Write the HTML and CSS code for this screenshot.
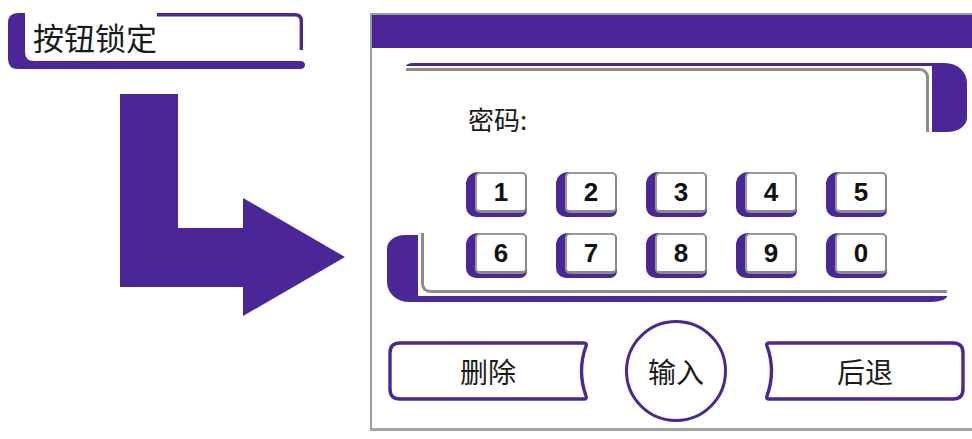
FILE: index.html
```html
<!DOCTYPE html>
<html lang="zh">
<head>
<meta charset="utf-8">
<title>按钮锁定</title>
<link rel="stylesheet" href="styles.css">
</head>
<body>
<div class="page">
  <aside class="side">
    <div class="lock-label">
      <svg class="lock-frame" width="297" height="56" viewBox="0 0 297 56" aria-hidden="true">
        <path class="pf" d="M0,10 Q0,0 10,0 L17,0 L17,39 Q17,48 26,48 L292,48 Q297,48 297,52 Q297,56 292,56 L10,56 Q0,56 0,46 Z"/>
        <path class="ps" d="M149,1.7 L287,1.7 Q293.3,1.7 293.3,8 L293.3,37"/>
      </svg>
      <span class="lock-text">按钮锁定</span>
    </div>
    <svg class="arrow" width="225" height="222" viewBox="0 0 225 222" aria-hidden="true">
      <polygon class="pf" points="0,0 58,0 58,134 123,134 123,104 225,163 123,222 123,193 0,193"/>
    </svg>
  </aside>

  <section class="panel">
    <div class="panel-head"></div>

    <div class="frame-top">
      <div class="ft-body">
        <div class="ft-bar"></div>
        <div class="ft-inner"><span class="pw-label">密码:</span></div>
      </div>
      <div class="ft-cap"></div>
    </div>

    <div class="key-row row-one">
      <div class="key"><span class="face">1</span></div>
      <div class="key"><span class="face">2</span></div>
      <div class="key"><span class="face">3</span></div>
      <div class="key"><span class="face">4</span></div>
      <div class="key"><span class="face">5</span></div>
    </div>

    <div class="frame-bot">
      <div class="fb-cap"></div>
      <div class="fb-main">
        <div class="fb-inner">
          <div class="key-row">
            <div class="key"><span class="face">6</span></div>
            <div class="key"><span class="face">7</span></div>
            <div class="key"><span class="face">8</span></div>
            <div class="key"><span class="face">9</span></div>
            <div class="key"><span class="face">0</span></div>
          </div>
        </div>
        <div class="fb-bar"></div>
      </div>
    </div>

    <div class="actions">
      <div class="act-btn">
        <svg class="act-shape" width="200" height="60" viewBox="0 0 200 60" aria-hidden="true">
          <path class="ps" d="M12,2 L196,2 Q199,2 198,5 Q189,30 198,55 Q199,58 196,58 L12,58 Q2,58 2,48 L2,12 Q2,2 12,2 Z"/>
        </svg>
        <span class="act-text">删除</span>
      </div>
      <div class="enter-btn"><span class="act-text">输入</span></div>
      <div class="act-btn">
        <svg class="act-shape" width="200" height="60" viewBox="0 0 200 60" aria-hidden="true">
          <path class="ps" d="M188,2 L4,2 Q1,2 2,5 Q11,30 2,55 Q1,58 4,58 L188,58 Q198,58 198,48 L198,12 Q198,2 188,2 Z"/>
        </svg>
        <span class="act-text">后退</span>
      </div>
    </div>
  </section>
</div>
</body>
</html>
```

FILE: styles.css
```css
* { box-sizing: border-box; }

html, body {
  margin: 0;
  padding: 0;
  background: #ffffff;
  overflow: hidden;
}

body {
  font-family: "Noto Sans CJK SC", "Noto Sans", sans-serif;
  color: #1a1a1a;
}

.page {
  display: flex;
  width: 972px;
  height: 439px;
}

.pf { fill: #4a2696; }
.ps { fill: none; stroke: #4a2696; stroke-width: 3.4; stroke-linejoin: round; }

/* left side */
.side {
  width: 370px;
  flex: none;
  padding: 13px 0 0 8px;
  display: flex;
  flex-direction: column;
}

.lock-label {
  display: grid;
  width: 297px;
  height: 56px;
}

.lock-frame,
.lock-text {
  grid-area: 1 / 1;
}

.lock-text {
  font-size: 31px;
  line-height: 1;
  padding: 8px 0 0 25px;
  color: #1a1a1a;
}

.arrow {
  display: block;
  margin: 25px 0 0 112px;
}

/* panel */
.panel {
  flex: 1;
  margin-top: 13px;
  height: 418px;
  border-left: 2px solid #9c9c9c;
  border-top: 2px solid #9c9c9c;
  border-bottom: 3px solid #a3a3a3;
  display: flex;
  flex-direction: column;
}

.panel-head {
  height: 33px;
  background: #4a2696;
  flex: none;
}

.frame-top {
  display: flex;
  height: 69px;
  margin: 15px 5px 0 34px;
}

.ft-body {
  flex: 1;
  display: flex;
  flex-direction: column;
}

.ft-bar {
  height: 8px;
  background: #4a2696;
  border-top-left-radius: 18px 8px;
}

.ft-inner {
  flex: 1;
  margin: 2px 3px 0 0;
  border-top: 3px solid #8c8c8c;
  border-right: 3px solid #8c8c8c;
  border-top-right-radius: 9px;
  padding: 35px 0 0 62px;
}

.pw-label {
  font-size: 26px;
  line-height: 1;
  display: block;
}

.ft-cap {
  width: 35px;
  background: #4a2696;
  border-radius: 0 22px 20px 0 / 0 20px 14px 0;
}

/* keys */
.key-row {
  display: flex;
  gap: 29px;
}

.row-one {
  margin: 40px 0 0 94px;
}

.key {
  width: 61px;
  height: 45px;
  padding: 0 0 4px 9px;
  background: #4a2696;
  border-radius: 12px 6px 7px 10px;
  display: flex;
}

.face {
  flex: 1;
  display: flex;
  align-items: center;
  justify-content: center;
  background: #ffffff;
  border: 2px solid #9a9a9a;
  border-right-color: #8a8a8a;
  border-bottom: 3px solid #8a8a8a;
  border-radius: 5px;
  font-family: "Liberation Sans", Arial, sans-serif;
  font-weight: bold;
  font-size: 26px;
  line-height: 1;
  color: #111;
}

/* lower frame */
.frame-bot {
  display: flex;
  margin: 16px 0 0 15px;
  width: 560px;
}

.fb-cap {
  width: 31px;
  margin-top: 2px;
  background: #4a2696;
  border-radius: 18px 0 0 22px / 14px 0 0 20px;
}

.fb-main {
  flex: 1;
  display: flex;
  flex-direction: column;
}

.fb-inner {
  margin-left: 3px;
  border-left: 3px solid #8c8c8c;
  border-bottom: 3px solid #8c8c8c;
  border-bottom-left-radius: 9px;
  padding: 0 0 12px 42px;
}

.fb-bar {
  height: 6px;
  margin-top: 3px;
  background: #4a2696;
  border-bottom-right-radius: 16px 6px;
}

/* actions */
.actions {
  display: flex;
  align-items: center;
  margin: 18px 0 0 16px;
}

.act-btn {
  display: grid;
  width: 200px;
  height: 60px;
}

.act-shape,
.act-btn .act-text {
  grid-area: 1 / 1;
}

.act-text {
  font-size: 28px;
  line-height: 1;
  align-self: center;
  justify-self: center;
  color: #1a1a1a;
}

.enter-btn {
  width: 102px;
  height: 102px;
  margin: 0 38px 0 37px;
  border: 3.5px solid #4a2696;
  border-radius: 50%;
  display: flex;
  align-items: center;
  justify-content: center;
}
```
